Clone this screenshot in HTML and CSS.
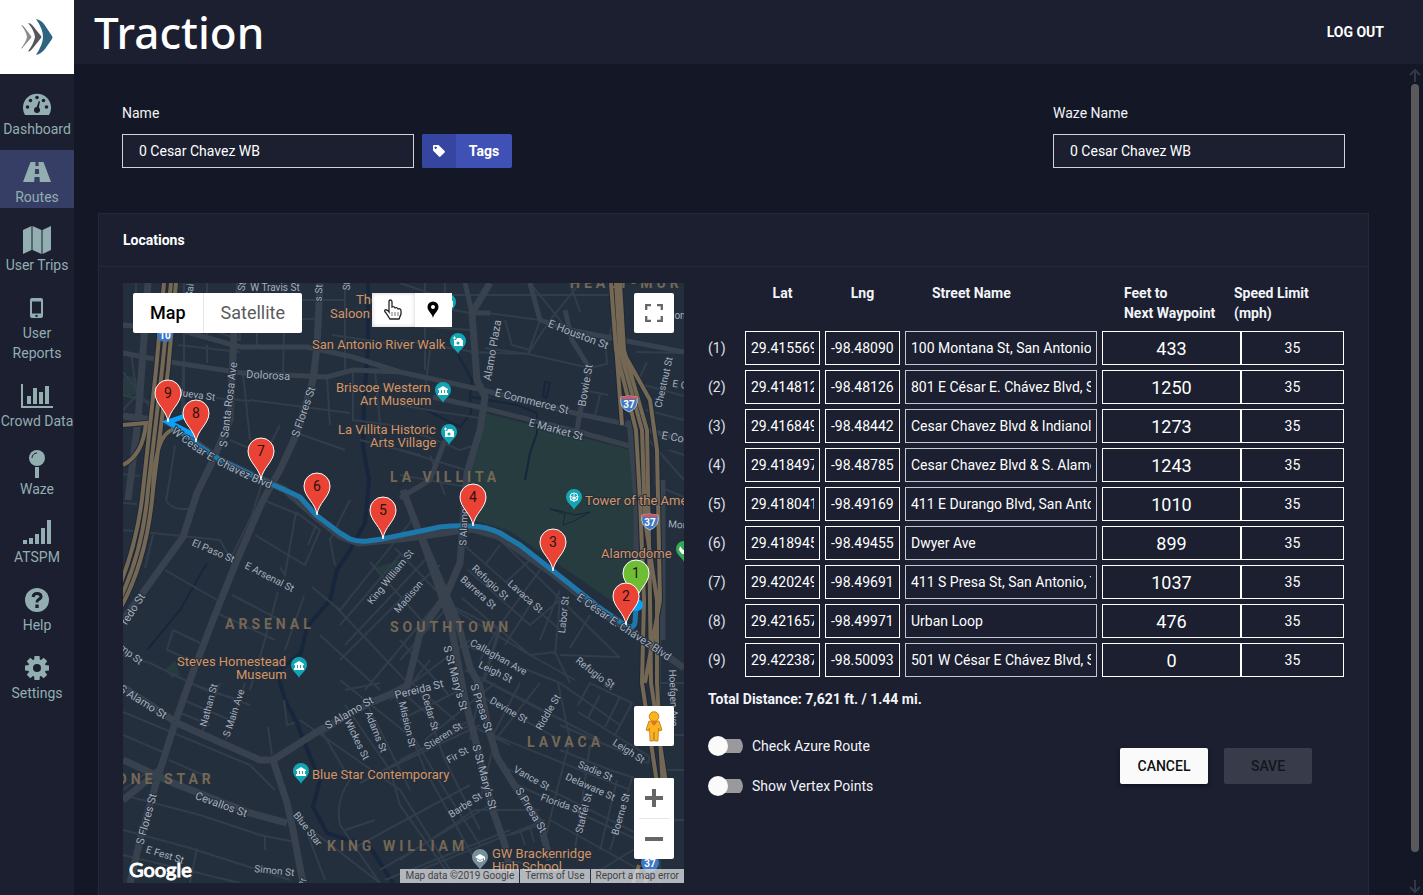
FILE: index.html
```html
<!DOCTYPE html>
<html lang="en">
<head>
<meta charset="utf-8">
<title>Traction - Routes</title>
<link rel="stylesheet" href="styles.css">
</head>
<body>
<div class="app">
<aside class="sidebar">
  <a class="logo" href="#" aria-label="Home">
    <svg width="32" height="36" viewBox="0 0 32 36"><path fill="#8b8b8d" d="M0 6Q2 6 4 9L10 17Q11 18 10 19L3 27Q1 30 0 29.500Q5 23 6 18Q5 12 0 6Z"/><path fill="#55565a" d="M7 4Q10 4 12 7L20 17Q21 18 20 19L12 29Q9 33 7 32.500Q13 24 14 18Q13 11 7 4Z"/><path fill="#2f6480" d="M15 0Q20 1 23 5L31 17Q32 18 31 20L24 30Q20 35 15 36Q22 25 22 18Q22 10 15 0Z"/></svg>
  </a>
  <nav class="nav">
    <a class="nav-item" href="#"><span class="nav-icon"><svg width="28" height="23" viewBox="0 0 28 23"><path fill="currentColor" d="M2 22A14 14 0 1 1 26 22Z"/><g fill="#1b1f30"><circle cx="4.500" cy="14" r="1.800"/><circle cx="7.500" cy="7.500" r="1.800"/><circle cx="14" cy="4.500" r="1.800"/><circle cx="20.500" cy="7.500" r="1.800"/><circle cx="23.500" cy="14" r="1.800"/><circle cx="14" cy="17" r="3"/><path d="M13 16L15.800 8L17 8.400L15.400 17Z"/></g></svg></span>Dashboard</a>
    <a class="nav-item active" href="#"><span class="nav-icon"><svg width="28" height="20" viewBox="0 0 28 20"><path fill="currentColor" fill-rule="evenodd" d="M7.500 0H12.600L12.300 4H15.700L15.400 0H20.500L28 20H16.800L16.500 15H11.500L11.200 20H0ZM12.100 7L11.800 12H16.200L15.900 7Z"/></svg></span>Routes</a>
    <a class="nav-item" href="#"><span class="nav-icon"><svg width="28" height="28" viewBox="0 0 28 28"><path fill="currentColor" d="M0 4L8.500 0V24L0 28ZM9.500 0L18.500 4V28L9.500 24ZM19.500 4L28 0V24L19.500 28Z"/></svg></span>User Trips</a>
    <a class="nav-item" href="#"><span class="nav-icon"><svg width="14" height="20" viewBox="0 0 14 20"><path fill="currentColor" fill-rule="evenodd" d="M2 0H11Q13 0 13 2V18Q13 20 11 20H2Q0 20 0 18V2Q0 0 2 0ZM2 3.500V15.500H11V3.500ZM6.500 16.700A1.200 1.200 0 1 0 6.510 16.700Z"/></svg></span>User Reports</a>
    <a class="nav-item" href="#"><span class="nav-icon"><svg width="32" height="24" viewBox="0 0 32 24"><path fill="currentColor" d="M0 0H2V22H32V24H0ZM6 12H10V20H6ZM12 4H16V20H12ZM18 8H22V20H18ZM24 2H28V20H24Z"/></svg></span>Crowd Data</a>
    <a class="nav-item" href="#"><span class="nav-icon"><svg width="18" height="28" viewBox="0 0 18 28"><circle cx="9" cy="8" r="8" fill="currentColor"/><path fill="currentColor" d="M7 17H11V28H7Z"/><path d="M4 8A5 5 0 0 1 9 3" fill="none" stroke="#1b1f30"/></svg></span>Waze</a>
    <a class="nav-item" href="#"><span class="nav-icon"><svg width="28" height="24" viewBox="0 0 28 24"><path fill="currentColor" d="M0 20H4V24H0ZM6 18H10V24H6ZM12 14H16V24H12ZM18 8H22V24H18ZM24 0H28V24H24Z"/></svg></span>ATSPM</a>
    <a class="nav-item" href="#"><span class="nav-icon"><svg width="24" height="24" viewBox="0 0 24 24"><circle cx="12" cy="12" r="12" fill="currentColor"/><path d="M8 9Q8.500 5.500 12 5.500Q16 5.500 16 8.500Q16 10.500 13.500 11.500Q12 12.200 12 14.500" fill="none" stroke="#1b1f30" stroke-width="3"/><path d="M10.300 16.500H13.700V20H10.300Z" fill="#1b1f30"/></svg></span>Help</a>
    <a class="nav-item" href="#"><span class="nav-icon"><svg width="24" height="24" viewBox="0 0 24 24"><g fill="currentColor"><circle cx="12" cy="12" r="9"/><path id="tooth" d="M9.500 0H14.500L15 5H9Z"/><use href="#tooth" transform="rotate(45 12 12)"/><use href="#tooth" transform="rotate(90 12 12)"/><use href="#tooth" transform="rotate(135 12 12)"/><use href="#tooth" transform="rotate(180 12 12)"/><use href="#tooth" transform="rotate(225 12 12)"/><use href="#tooth" transform="rotate(270 12 12)"/><use href="#tooth" transform="rotate(315 12 12)"/></g><circle cx="12" cy="12" r="4" fill="#1b1f30"/></svg></span>Settings</a>
  </nav>
</aside>
<div class="page">
<header class="topbar"><h1 class="brand">Traction</h1><a class="logout" href="#">LOG OUT</a></header>
<div class="viewport">
<main class="content">
  <form class="names">
    <div class="name-group">
      <div class="field"><label for="name">Name</label><input id="name" type="text" value="0 Cesar Chavez WB"></div>
      <button type="button" class="tags"><span class="tags-icon"><svg width="12" height="12" viewBox="0 0 12 12"><path fill="#fff" fill-rule="evenodd" d="M0 1Q0 0 1 0H5.500L11.600 6Q12.300 6.700 11.600 7.400L7.400 11.600Q6.700 12.300 6 11.600L0 5.500ZM2.700 1.500A1.200 1.200 0 1 0 2.710 1.500Z"/></svg></span><span class="tags-text">Tags</span></button>
    </div>
    <div class="field"><label for="waze">Waze Name</label><input id="waze" type="text" value="0 Cesar Chavez WB"></div>
  </form>
  <section class="card">
    <h2 class="card-title">Locations</h2>
    <div class="card-body">
      <div class="map">
        <svg class="map-canvas" viewBox="123 283 561 600" preserveAspectRatio="xMidYMid slice" role="img" aria-label="Route map">
          <defs>
            <path id="pin" d="M0 0C-1-12-13-18-13-29A13 13 0 0 1 13-29C13-18 1-12 0 0Z"/>
            <path id="poi" d="M0 12C-1 8-8 5-8-1A8 8 0 0 1 8-1C8 5 1 8 0 12Z"/>
            <g id="camera"><path fill="#fff" d="M-4-2H-2L-1-4H3L4-2H5V4H-4Z"/><circle cy="1" r="1.500" fill="#12a5b4"/><path stroke="#fff" d="M-5-4H-2M-3.500-5.500V-2.500"/></g>
            <path id="museum" fill="#fff" fill-rule="evenodd" d="M-5-2L0-5L5-2V-1H4V2H5V4H-5V2H-4V-1H-5ZM-2-1V2H-1V-1ZM1-1V2H2V-1Z"/>
            <g id="shield"><path d="M-8-6Q0-8 8-6Q10 5 0 9Q-10 5-8-6Z" fill="#3d78c4" stroke="#dfe6ee" stroke-width=".7"/><path d="M-8-6Q0-8 8-6V-4H-8Z" fill="#d4545a"/><text y="5" text-anchor="middle" class="shield-text">37</text></g>
            <path id="chavez-west" d="M171 432Q190 449 213 462T278 492"/>
            <path id="chavez-east" d="M576 599L613 625Q645 645 684 672"/>
          </defs>
          <path fill="#242f3e" d="M123 283H684V883H123Z"/>
          <path fill="#263c3f" d="M485 413L631 450L637 500V590L625 610L552 560L510 531L472 520L467 475L480 445Z"/>
          <g fill="#263c3f"><circle cx="129" cy="386" r="10"/><path d="M165 670L175 660L180 675L172 678Z"/><path d="M375 568L400 560L390 577Z"/></g>
          <g class="water">
            <path stroke-width="4" d="M368 283V347L364 400L363 447L369 480L365 523L350 550L337 570L330 600L307 627L301 653L277 672L285 700L297 723L310 757L320 780L313 807L327 833L370 847L393 883"/>
            <path stroke-width="2" d="M457 353L472 380L470 397L517 405L537 413V433L530 453L525 480M470 397L471 413L460 427L440 417L420 407M207 563L180 610L147 650M545 382L550 383L546 398L543 396Z"/>
            <path fill="#17263c" d="M550 509L565 514L563 525L574 521L590 512L575 515L560 511Z"/>
          </g>
          <g class="minor">
            <path d="M123 327H160M123 395L160 405M131 353L137 395L123 410M123 372L160 420M136 283V330M177 318L240 340L238 283M184 283V418M207 283V335M148 300L178 303M178 345L240 352M183 362L182 418M257 283V348M285 283L283 375M207 345V363M265 300H345M235 312H300M240 325L320 318M345 283V372M332 335L400 345M353 370V420L430 430M327 377L330 425M243 373L250 440M250 400L350 413M216 398L250 401M230 440L265 455M265 455L280 425M297 433L345 450M360 440L420 455M375 370L382 445"/>
            <path d="M400 300L470 313M400 325L470 330M425 283V370M445 283V325M400 340L475 352M430 350L425 390M530 283L560 320L590 369M488 313L540 320L528 354L485 348M505 320L512 345L530 350M580 283L550 320L528 354M470 352L528 354L590 368L607 364L605 335M400 283L435 295H610M623 283L607 345M640 322L684 315M636 352L684 353M647 362L637 383L684 396M570 283L580 312M582 390L608 395M600 395L594 420M655 430V485L684 497M669 450L684 455M646 410L684 420M640 430L684 480M400 405L440 412L480 418M410 430L460 450L476 445M400 450L466 470M430 455L445 495M400 475L467 487"/>
            <path d="M123 474L140 476M123 503L137 504M123 530L220 540L234 565M175 445Q170 480 166 500Q170 510 190 509M263 480L252 515L230 560M263 500L300 515M296 512L285 575L280 567M296 512L320 530L305 565L255 535M316 525L308 545M350 500L330 540L335 565M165 570L217 600M173 630L200 643M173 630L167 650L190 660M123 655L150 663L205 690M145 568L153 535M278 592L262 650L250 690M304 596L285 650M232 595L280 620M217 613L275 640M312 587L340 610L412 520M320 635L380 690M334 605L405 680M370 562L430 630M395 548L455 610L530 655L575 680M340 625L362 600L400 555M345 645L425 560M340 660L400 600L440 565M365 690L440 600M400 660L445 610M390 700L470 640M430 660L412 683L455 720M400 640L448 694M485 525L620 658M464 545L560 630M468 570L530 625L560 600M500 530L530 560L505 583M540 570L500 625L480 660M560 590L540 640M530 605L505 645M462 598L530 655L555 652L570 683M560 600L555 655M590 615L570 648M500 545L485 565M560 655L618 657M440 600L500 630L485 680L600 740"/>
            <path d="M460 643L560 683L620 725M465 670L550 715M470 690L560 740M500 625L480 690L470 740M540 683L495 740L480 800M558 683L570 740L557 790L545 840M520 683L493 735M493 735L630 790M500 765L650 840M513 783L660 850M578 705L590 683L632 703L615 735M578 712L650 757L648 763L560 725M600 695L588 718M620 697L605 727M617 780L600 850M632 778L610 850M590 745L575 850M635 778L610 770L560 750M550 820L640 870M400 760L470 725L510 745M400 860L475 810L540 810M420 870L545 820M510 835L540 825M520 830L525 845M530 827L534 842M500 850L530 883M510 860L600 883M600 870L650 840"/>
            <path d="M320 728L350 780Q335 800 340 825L380 883M340 680L415 740L445 790L480 845M300 720L400 790L450 870M345 705L390 770L400 805L455 883M365 700L410 790M395 695L425 770L475 860M418 685L445 760L480 830M320 735L410 680M360 783L430 745L470 720M385 770L480 725M345 830L375 820M350 850L470 785M380 870L490 805M385 880L510 830M400 690L440 725M425 740L495 683M400 720L460 690"/>
            <path d="M123 712L250 765L275 790M123 735L165 753M169 760L210 778M123 795L200 815L260 835L295 842M123 830L190 848L290 880M150 770L123 790M265 836V850M197 848L190 883M123 855L165 865L240 883M205 690L240 700M190 683L250 705M183 700L230 720M178 712L210 725M201 735L220 683M226 740L245 683M268 727L272 755M284 700L287 725L295 723M305 825L380 883M308 835L325 880M345 690L380 683M660 640V883M660 683H684M660 735H684M660 770H684M660 820H684"/>
          </g>
          <g class="road">
            <path d="M123 353L170 362L243 373L327 377L353 370L400 372L483 390L570 412L630 425L684 440M240 347H307L353 357L400 372M433 397L483 408L583 433L633 447M240 347L180 330L123 325"/>
            <path class="wide" d="M240 283L234 333L230 420L213 460L197 493L183 537L147 587L123 620M320 283L317 347L313 380L297 433L280 470L263 500L237 560L213 620L190 680L175 723L157 780L140 840L130 883"/>
            <path class="wide" d="M490 283L472 313L477 380L485 397L480 430L467 473L463 523L460 563L447 593L420 633L407 687L370 703L320 730L273 760L260 760L177 723L123 687M403 490L427 553L450 620L465 700L478 750L492 808L505 845L512 883M423 540L457 620L470 667L480 687L488 727L497 757L513 783L540 823L550 860"/>
            <path class="wide" d="M273 760L287 803L293 830L303 883M123 416L168 422L220 460L285 490L316 517L340 536L358 543L400 539L472 529L500 537L552 573L600 612L640 637L684 668M630 420L637 500V600M662 480V640M123 760L173 783L250 813L287 823M123 800L160 770M148 283L138 420L128 500"/>
            <path d="M530 283L540 320L570 330L684 352M565 310L572 340L590 369L580 412L577 430M465 283L472 313L490 313M400 498L430 480L445 440"/>
          </g>
          <g class="casing"><path id="i10" d="M164 283L156 370L143 490Q138 540 120 585M171 283L162 370L148 490Q143 550 121 597M176 283L168 370L153 490Q147 560 121 607M123 465Q143 455 146 423L123 425M175 429Q155 432 153 490"/><path id="i37" d="M611 283L616 350L636 430L640 500L644 600L642 683L658 790M620 283L624 350L647 430L650 600L651 683L667 790M616 283L620 350L642 430L645 520L657 600L657 683L663 790M622 350L650 400L657 450L660 600L645 683M616 345L622 425M633 883L639 865M645 883L650 865"/></g>
          <g class="highway"><use href="#i10"/><use href="#i37"/></g>
          <g class="route">
            <path d="M168 422L195 443L220 460L262 480L285 490L300 497L316 515L340 533L350 539Q358 542 368 541L382 539L440 527Q456 525 472 526T500 533L520 545L552 570L600 608L625 625Q634 630 635 622L636 606"/>
          </g>
          <path d="M197 412L168 422L196 436" fill="none" stroke="#0aa2f8" stroke-width="5"/><circle cx="637" cy="605" r="6" fill="#0aa2f8"/>

          <g class="street small">
            <text transform="translate(275 291)">W Travis St</text><text transform="translate(193 291)rotate(-83)">Sai</text><text transform="translate(245 287)rotate(-80)">St</text><text transform="translate(322 293)rotate(-87)">s St</text><text transform="translate(350 286)rotate(-87)">St</text>
            <text transform="translate(195 398)rotate(8)">Nueva St</text><text transform="translate(667 383)rotate(-77)">Chestnut St</text><text transform="translate(681 388)rotate(8)">E Cr</text><text transform="translate(680 319)">on</text>
            <text transform="translate(212 554)rotate(23)">El Paso St</text><text transform="translate(268 580)rotate(27)">E Arsenal St</text><text transform="translate(129 657)rotate(38)">mp St</text>
            <text transform="translate(393 579)rotate(-51)">King William St</text><text transform="translate(411 599)rotate(-50)">Madison</text><text transform="translate(467 527)rotate(-88)">S Alamo</text>
            <text transform="translate(488 585)rotate(43)">Refugio St</text><text transform="translate(476 595)rotate(42)">Barrera St</text><text transform="translate(523 599)rotate(42)">Lavaca St</text><text transform="translate(567 615)rotate(-84)">Labor St</text>
            <text transform="translate(497 660)rotate(29)">Callaghan Ave</text><text transform="translate(494 675)rotate(26)">Leigh St</text><text transform="translate(593 676)rotate(38)">Refugio St</text><text transform="translate(670 698)rotate(88)">Hoefgen Ave</text>
            <text transform="translate(212 706)rotate(-75)">Nathan St</text><text transform="translate(237 714)rotate(-72)">S Main Ave</text><text transform="translate(354 741)rotate(64)">Wickes St</text><text transform="translate(373 733)rotate(68)">Adams St</text><text transform="translate(404 725)rotate(77)">Mission St</text><text transform="translate(427 713)rotate(74)">Cedar St</text>
            <text transform="translate(445 739)rotate(-32)">Stieren St</text><text transform="translate(459 758)rotate(-30)">Fir St</text><text transform="translate(507 713)rotate(30)">Devine St</text><text transform="translate(551 714)rotate(-60)">Riddle St</text><text transform="translate(627 754)rotate(33)">Leigh St</text><text transform="translate(608 686)rotate(35)">St</text>
            <text transform="translate(594 774)rotate(23)">Sadie St</text><text transform="translate(589 790)rotate(24)">Delaware St</text><text transform="translate(530 781)rotate(29)">Vance St</text><text transform="translate(560 807)rotate(19)">Florida St</text><text transform="translate(587 814)rotate(-76)">Staffel St</text><text transform="translate(624 815)rotate(-74)">Boerne St</text><text transform="translate(467 808)rotate(-33)">Barbe St</text>
            <text transform="translate(164 858)rotate(17)">E Fest St</text><text transform="translate(274 874)rotate(6)">Simon St</text><text transform="translate(305 831)rotate(52)">Blue Star</text><text transform="translate(306 883)rotate(-85)">Pr</text><text transform="translate(678 528)rotate(4)">Mon</text>
          </g>
          <g class="street">
            <text transform="translate(268 379)rotate(3)">Dolorosa</text><text transform="translate(232 405)rotate(-83)">S Santa Rosa Ave</text><text transform="translate(307 413)rotate(-71)">S Flores St</text><text transform="translate(577 338)rotate(21)">E Houston St</text><text transform="translate(496 351)rotate(-80)">Alamo Plaza</text><text transform="translate(589 386)rotate(-80)">Bowie St</text><text transform="translate(531 405)rotate(14)">E Commerce St</text><text transform="translate(555 433)rotate(15)">E Market St</text><text transform="translate(674 441)rotate(10)">E Cor</text>
            <text transform="translate(136 611)rotate(-57)">redo St</text><text transform="translate(141 705)rotate(32)">S Alamo St</text><text transform="translate(351 716)rotate(-30)">S Alamo St</text><text transform="translate(420 693)rotate(-14)">Pereida St</text><text transform="translate(452 679)rotate(75)">S St Mary's St</text><text transform="translate(481 778)rotate(75)">S St Mary's St</text><text transform="translate(478 709)rotate(72)">S Presa St</text><text transform="translate(528 812)rotate(59)">S Presa St</text><text transform="translate(220 808)rotate(20)">Cevallos St</text><text transform="translate(150 820)rotate(-75)">S Flores St</text>
          </g>
          <g class="street path"><text><textPath href="#chavez-west">W Cesar E. Chavez Blvd</textPath></text><text><textPath href="#chavez-east">E César E. Chávez Blvd</textPath></text></g>
          <g class="district"><text x="570" y="288">HEALY-MUR</text><text x="390" y="482">LA VILLITA</text><text x="225" y="629">ARSENAL</text><text x="390" y="632">SOUTHTOWN</text><text x="527" y="747">LAVACA</text><text x="117" y="784">ONE STAR</text><text x="327" y="851">KING WILLIAM</text></g>
          <g class="place"><text x="356" y="304">The</text><text x="330" y="318">Saloon</text><text x="312" y="349">San Antonio River Walk</text><text x="336" y="392">Briscoe Western</text><text x="360" y="405">Art Museum</text><text x="338" y="434">La Villita Historic</text><text x="370" y="447">Arts Village</text><text x="585" y="505">Tower of the Americas</text><text x="601" y="558">Alamodome</text><text x="177" y="666">Steves Homestead</text><text x="236" y="679">Museum</text><text x="312" y="779">Blue Star Contemporary</text><text x="492" y="858">GW Brackenridge</text><text x="492" y="871">High School</text></g>
          <g class="pois" fill="#12a5b4"><g transform="translate(448 303)"><use href="#poi"/><use href="#camera"/></g><g transform="translate(458 342)"><use href="#poi"/><use href="#camera"/></g><g transform="translate(443 391)"><use href="#poi"/><use href="#museum"/></g><g transform="translate(449 433)"><use href="#poi"/><use href="#camera"/></g><g transform="translate(574 498)"><use href="#poi"/><path d="M0 4V-4M-4-2L4 2M-4 2L4-2" stroke="#fff"/><circle cy="-1" r="4" fill="none" stroke="#fff"/></g><g transform="translate(299 666)"><use href="#poi"/><use href="#museum"/></g><g transform="translate(301 772)"><use href="#poi"/><use href="#museum"/></g><g transform="translate(480 858)" fill="#78909c"><use href="#poi"/><path fill="#fff" d="M-5-1L0-4L5-1V2H4V0L0 2ZM-3 1L0 3L3 1V3L0 4L-3 3Z"/></g><g transform="translate(684 550)" fill="#34a853"><use href="#poi"/><path fill="#fff" d="M-4-4L-1 0H4V4H-2L-5 0Z"/></g></g>
          <use href="#shield" x="629" y="403"/><use href="#shield" x="650" y="521"/>
          <circle cx="165" cy="334" r="8" fill="#3d78c4"/><text class="shield-text" x="165" y="339" text-anchor="middle">10</text><circle cx="650" cy="863" r="9" fill="#3d78c4"/><text class="shield-text" x="650" y="867" text-anchor="middle">37</text>
          <g class="pins">
            <g transform="translate(636 602)"><use href="#pin" fill="#6ebe35"/><text y="-24">1</text></g><g transform="translate(626 625)"><use href="#pin"/><text y="-24">2</text></g><g transform="translate(553 571)"><use href="#pin"/><text y="-24">3</text></g><g transform="translate(473 526)"><use href="#pin"/><text y="-24">4</text></g><g transform="translate(383 539)"><use href="#pin"/><text y="-24">5</text></g><g transform="translate(317 515)"><use href="#pin"/><text y="-24">6</text></g><g transform="translate(261 480)"><use href="#pin"/><text y="-24">7</text></g><g transform="translate(168 422)"><use href="#pin"/><text y="-24">9</text></g><g transform="translate(196 442)"><use href="#pin"/><text y="-24">8</text></g>
          </g>
        </svg>
        <div class="map-types"><button type="button" class="selected">Map</button><button type="button">Satellite</button></div>
        <div class="map-tools">
          <button type="button" aria-label="Pan"><svg width="20" height="22" viewBox="0 0 20 22"><path d="M6 13V3Q6 1 7.500 1T9 3V8Q11 7 12 9Q14 8 15 10Q18 9 18 12V15L16 20H7L3 14Q1 12 2 11Q4 10 6 13Z" fill="#fff" stroke="#222" stroke-width="1.300"/><path d="M9 13V17M12 13V17M15 13V17" stroke="#777"/></svg></button>
          <button type="button" aria-label="Add marker"><svg width="12" height="18" viewBox="0 0 12 18"><path fill="#000" fill-rule="evenodd" d="M6 17C5 12 .5 10 .5 6A5.500 5.500 0 0 1 11.500 6C11.500 10 7 12 6 17ZM6 4A2 2 0 1 0 6.010 4Z"/></svg></button>
        </div>
        <button type="button" class="map-button fullscreen" aria-label="Full screen"><svg width="18" height="18" viewBox="0 0 18 18"><path fill="none" stroke="#666" stroke-width="2.300" d="M1.200 6V1.200H6M12 1.200H16.800V6M16.800 12V16.800H12M6 16.800H1.200V12"/></svg></button>
        <div class="map-side">
          <button type="button" class="map-button" aria-label="Street view"><svg width="18" height="31" viewBox="0 0 18 31"><path fill="#fbb51c" stroke="#b9741a" stroke-width=".8" d="M4 10H14L17 19L14.500 20L13.500 17L13 30H9.700L9 21L8.300 30H5L4.500 17L3.500 20L1 19Z"/><path fill="#e0702a" d="M5.500 10.500H12.500L9 15Z"/><circle cx="9" cy="5.500" r="4.800" fill="#fbb51c" stroke="#b9741a" stroke-width=".8"/></svg></button>
          <div class="zoom"><button type="button" aria-label="Zoom in"><svg width="18" height="18" viewBox="0 0 18 18"><path fill="#666" d="M7 0H11V7H18V11H11V18H7V11H0V7H7Z"/></svg></button><button type="button" aria-label="Zoom out"><svg width="18" height="18" viewBox="0 0 18 18"><path fill="#666" d="M0 7H18V11H0Z"/></svg></button></div>
        </div>
        <span class="google">Google</span>
        <div class="credits"><span>Map data ©2019 Google</span><a href="#">Terms of Use</a><a href="#">Report a map error</a></div>
      </div>
      <div class="details">
        <table class="stops">
          <colgroup><col class="c-num"><col class="c-geo"><col class="c-geo"><col><col class="c-feet"><col class="c-join"><col class="c-speed"></colgroup>
          <thead><tr><td></td><th>Lat</th><th>Lng</th><th class="street-head">Street Name</th><th class="feet-head">Feet to<br>Next Waypoint</th><th colspan="2" class="speed-head">Speed Limit<br>(mph)</th></tr></thead>
          <tbody>
            <tr><td>(1)</td><td><input aria-label="Lat 1" value="29.415569"></td><td><input aria-label="Lng 1" value="-98.48090"></td><td><input class="street-input" aria-label="Street 1" value="100 Montana St, San Antonio, TX"></td><td colspan="2" class="tight"><input class="feet" aria-label="Feet 1" value="433"></td><td class="tight"><input class="speed" aria-label="Speed 1" value="35"></td></tr>
            <tr><td>(2)</td><td><input aria-label="Lat 2" value="29.414812"></td><td><input aria-label="Lng 2" value="-98.48126"></td><td><input class="street-input" aria-label="Street 2" value="801 E César E. Chávez Blvd, San Antonio"></td><td colspan="2" class="tight"><input class="feet" aria-label="Feet 2" value="1250"></td><td class="tight"><input class="speed" aria-label="Speed 2" value="35"></td></tr>
            <tr><td>(3)</td><td><input aria-label="Lat 3" value="29.416849"></td><td><input aria-label="Lng 3" value="-98.48442"></td><td><input class="street-input" aria-label="Street 3" value="Cesar Chavez Blvd &amp; Indianola St"></td><td colspan="2" class="tight"><input class="feet" aria-label="Feet 3" value="1273"></td><td class="tight"><input class="speed" aria-label="Speed 3" value="35"></td></tr>
            <tr><td>(4)</td><td><input aria-label="Lat 4" value="29.418497"></td><td><input aria-label="Lng 4" value="-98.48785"></td><td><input class="street-input" aria-label="Street 4" value="Cesar Chavez Blvd &amp; S. Alamo St"></td><td colspan="2" class="tight"><input class="feet" aria-label="Feet 4" value="1243"></td><td class="tight"><input class="speed" aria-label="Speed 4" value="35"></td></tr>
            <tr><td>(5)</td><td><input aria-label="Lat 5" value="29.418041"></td><td><input aria-label="Lng 5" value="-98.49169"></td><td><input class="street-input" aria-label="Street 5" value="411 E Durango Blvd, San Antonio"></td><td colspan="2" class="tight"><input class="feet" aria-label="Feet 5" value="1010"></td><td class="tight"><input class="speed" aria-label="Speed 5" value="35"></td></tr>
            <tr><td>(6)</td><td><input aria-label="Lat 6" value="29.418945"></td><td><input aria-label="Lng 6" value="-98.49455"></td><td><input class="street-input" aria-label="Street 6" value="Dwyer Ave"></td><td colspan="2" class="tight"><input class="feet" aria-label="Feet 6" value="899"></td><td class="tight"><input class="speed" aria-label="Speed 6" value="35"></td></tr>
            <tr><td>(7)</td><td><input aria-label="Lat 7" value="29.420249"></td><td><input aria-label="Lng 7" value="-98.49691"></td><td><input class="street-input" aria-label="Street 7" value="411 S Presa St, San Antonio, TX"></td><td colspan="2" class="tight"><input class="feet" aria-label="Feet 7" value="1037"></td><td class="tight"><input class="speed" aria-label="Speed 7" value="35"></td></tr>
            <tr><td>(8)</td><td><input aria-label="Lat 8" value="29.421657"></td><td><input aria-label="Lng 8" value="-98.49971"></td><td><input class="street-input" aria-label="Street 8" value="Urban Loop"></td><td colspan="2" class="tight"><input class="feet" aria-label="Feet 8" value="476"></td><td class="tight"><input class="speed" aria-label="Speed 8" value="35"></td></tr>
            <tr><td>(9)</td><td><input aria-label="Lat 9" value="29.422387"></td><td><input aria-label="Lng 9" value="-98.50093"></td><td><input class="street-input" aria-label="Street 9" value="501 W César E Chávez Blvd, San Antonio"></td><td colspan="2" class="tight"><input class="feet" aria-label="Feet 9" value="0"></td><td class="tight"><input class="speed" aria-label="Speed 9" value="35"></td></tr>
          </tbody>
        </table>
        <p class="total">Total Distance: 7,621 ft. / 1.44 mi.</p>
        <div class="options">
          <div class="toggles">
            <label class="toggle"><input type="checkbox">Check Azure Route</label>
            <label class="toggle"><input type="checkbox">Show Vertex Points</label>
          </div>
          <div class="actions"><button type="button" class="action">CANCEL</button><button type="button" class="action" disabled>SAVE</button></div>
        </div>
      </div>
    </div>
  </section>
</main>
<div class="scrollbar" aria-hidden="true">
  <svg width="12" height="14" viewBox="0 0 12 14"><path d="M6 14V2M1 7L6 2L11 7" fill="none" stroke="#343744" stroke-width="2"/></svg>
  <span class="thumb"></span>
  <svg width="12" height="14" viewBox="0 0 12 14"><path d="M6 0V12M1 7L6 12L11 7" fill="none" stroke="#343744" stroke-width="2"/></svg>
</div>
</div>
</div>
</div>
</body>
</html>
```
FILE: styles.css
```css
* { box-sizing: border-box; }
body { margin: 0; background: #141725; color: #f2f4f8; font: 14px/20px Roboto, sans-serif; }
button, input { font: inherit; color: inherit; border: 0; padding: 0; margin: 0; border-radius: 0; }
button { display: flex; align-items: center; justify-content: center; }
a { color: inherit; text-decoration: none; }
svg { display: block; }

.app { display: flex; height: 100vh; overflow: hidden; }
.sidebar { flex: 0 0 74px; background: #1b1f30; }
.logo { display: flex; align-items: center; justify-content: center; height: 74px; background: #fff; }
.nav { display: flex; flex-direction: column; gap: 10px; padding-top: 8px; }
.nav-item { display: flex; flex-direction: column; align-items: center; gap: 1px; padding: 8px 0 1px; color: #92aeb0; text-align: center; }
.nav-item.active { background: #373e65; }
.nav-icon { display: flex; align-items: center; height: 28px; }

.page { flex: 1; min-width: 0; display: flex; flex-direction: column; }
.topbar { flex: 0 0 64px; display: flex; align-items: center; justify-content: space-between; padding: 0 39px 0 20px; background: #1b1f30; }
.brand { margin: 0; font: 500 44px/64px "Noto Sans", sans-serif; color: #fff; }
.logout { color: #fff; font-weight: 700; }
.viewport { flex: 1; min-height: 0; display: flex; }
.content { flex: 1; min-width: 0; overflow: hidden; padding: 39px 38px 0 24px; }

.names { display: flex; justify-content: space-between; padding: 0 24px; margin-bottom: 45px; }
.name-group { display: flex; align-items: flex-end; gap: 8px; }
.field { display: flex; flex-direction: column; gap: 11px; width: 292px; }
.field input { height: 34px; padding: 0 16px; background: #1b1f30; border: 1px solid #cfd3da; color: #fff; }
.tags { height: 34px; width: 90px; border-radius: 2px; overflow: hidden; background: #3f51b5; color: #fff; font-weight: 700; }
.tags-icon { display: flex; align-items: center; justify-content: center; width: 34px; height: 34px; background: #3646a0; }
.tags-text { flex: 1; }

.card { background: #1b1f30; border: 1px solid #242839; }
.card-title { margin: 0; padding: 16px 24px; border-bottom: 1px solid #242839; font-size: 14px; line-height: 20px; font-weight: 700; color: #fff; }
.card-body { display: grid; grid-template-columns: 561fr 636fr; gap: 24px; align-items: start; padding: 16px 24px 32px; }

.map { position: relative; height: 600px; overflow: hidden; background: #242f3e; }
.map-canvas { width: 100%; height: 100%; }
.water path { fill: none; stroke: #17263c; }
.minor { fill: none; stroke: #323d4b; stroke-width: 2; }
.road { fill: none; stroke: #38414e; stroke-width: 5; stroke-linejoin: round; }
.road .wide { stroke-width: 7; }
.casing { fill: none; stroke: #1f2835; stroke-width: 6; }
.highway { fill: none; stroke: #746855; stroke-width: 4; }
.route { fill: none; stroke: #1d79ab; stroke-width: 5; stroke-linejoin: round; }
.street { font-size: 11px; fill: #a6afbd; text-anchor: middle; stroke: #242f3e; stroke-width: 2px; paint-order: stroke; }
.street.small { font-size: 10px; }
.street.path { text-anchor: start; }
.district { font-size: 14px; font-weight: 700; letter-spacing: 4px; fill: #746855; }
.place { font-size: 13px; fill: #d59563; stroke: #242f3e; stroke-width: 2px; paint-order: stroke; }
.pois { stroke: none; }
.shield-text { font-size: 10px; font-weight: 700; fill: #fff; }
.pins { fill: #ea4335; }
.pins use { stroke: #fff; stroke-width: 1px; }
.pins text { font-size: 14px; text-anchor: middle; fill: #28130f; }
.map button { background: #fff; }
.map-types, .map-tools, .fullscreen { position: absolute; top: 10px; display: flex; }
.map-types { left: 10px; border-radius: 2px; overflow: hidden; font-size: 18px; color: #5a5a5a; }
.map-types button { height: 40px; padding: 0 17px; }
.map-types .selected { color: #000; font-weight: 500; border-right: 1px solid #e6e6e6; }
.map-tools { left: 50%; transform: translateX(-32px); }
.map-tools button { width: 37px; height: 34px; }
.map-tools button:first-child { width: 43px; box-shadow: inset 0 0 4px #ccc; }
.map-button { width: 40px; height: 40px; border-radius: 2px; }
.fullscreen { right: 10px; }
.map-side { position: absolute; right: 10px; bottom: 24px; display: flex; flex-direction: column; gap: 32px; }
.zoom { display: flex; flex-direction: column; background: #fff; border-radius: 2px; overflow: hidden; }
.zoom button { width: 40px; height: 40px; }
.zoom button + button { width: 30px; height: 41px; margin: 0 5px; border-top: 1px solid #e6e6e6; }
.google { position: absolute; left: 6px; bottom: 2px; font: 400 20px/24px Lato, sans-serif; color: #fff; -webkit-text-stroke: 1px #fff; }
.credits { position: absolute; right: 0; bottom: 0; display: flex; gap: 1px; font-size: 10px; line-height: 14px; color: #444; }
.credits > * { padding: 0 5px; background: rgba(225, 228, 232, .75); }

.stops { width: 100%; table-layout: fixed; border-collapse: collapse; }
.c-num { width: 37px; }
.c-geo { width: 80px; }
.c-feet { width: 132px; }
.c-join { width: 7px; }
.c-speed { width: 103px; }
.stops th, .stops td { padding: 0 5px 5px 0; }
.stops td:first-child { color: #dfe2e8; }
.stops thead th { padding-bottom: 8px; font-weight: 700; vertical-align: top; white-space: nowrap; }
.stops .street-head { text-align: left; padding-left: 27px; }
.stops .feet-head { text-align: left; padding-left: 22px; }
.stops .speed-head { text-align: left; }
.stops td.tight { padding-right: 0; }
.stops input { display: block; width: 100%; height: 34px; padding: 0 5px; background: transparent; border: 1px solid #fff; color: #fff; }
.stops .street-input { border-color: #c3c7cf; }
.stops .feet { font-size: 18px; text-align: center; }
.stops .speed { text-align: center; }
.total { margin: 7px 0 27px; font-weight: 700; }
.options { display: flex; align-items: center; justify-content: space-between; }
.toggles { display: flex; flex-direction: column; gap: 20px; }
.toggle { display: flex; align-items: center; gap: 9px; }
.toggle input { appearance: none; display: flex; align-items: center; width: 35px; height: 20px; background: linear-gradient(#9a9a9c, #9a9a9c) 3px 3px / 32px 14px no-repeat; border-radius: 0 10px 10px 0; }
.toggle input::before { content: ""; width: 20px; height: 20px; border-radius: 50%; background: #fafafa; }
.actions { display: flex; gap: 16px; margin-right: 32px; }
.action { width: 88px; height: 36px; border-radius: 2px; background: #fafafa; color: #111; font-weight: 500; box-shadow: 0 2px 4px rgba(0, 0, 0, .4); }
.action:disabled { background: #373b4a; color: #14161f; box-shadow: none; }

.scrollbar { flex: 0 0 16px; display: flex; flex-direction: column; align-items: center; padding: 4px 0 1px; gap: 2px; }
.thumb { flex: 1; width: 8px; margin-bottom: 26px; border-radius: 4px; background: #5a5a5e; }
```
